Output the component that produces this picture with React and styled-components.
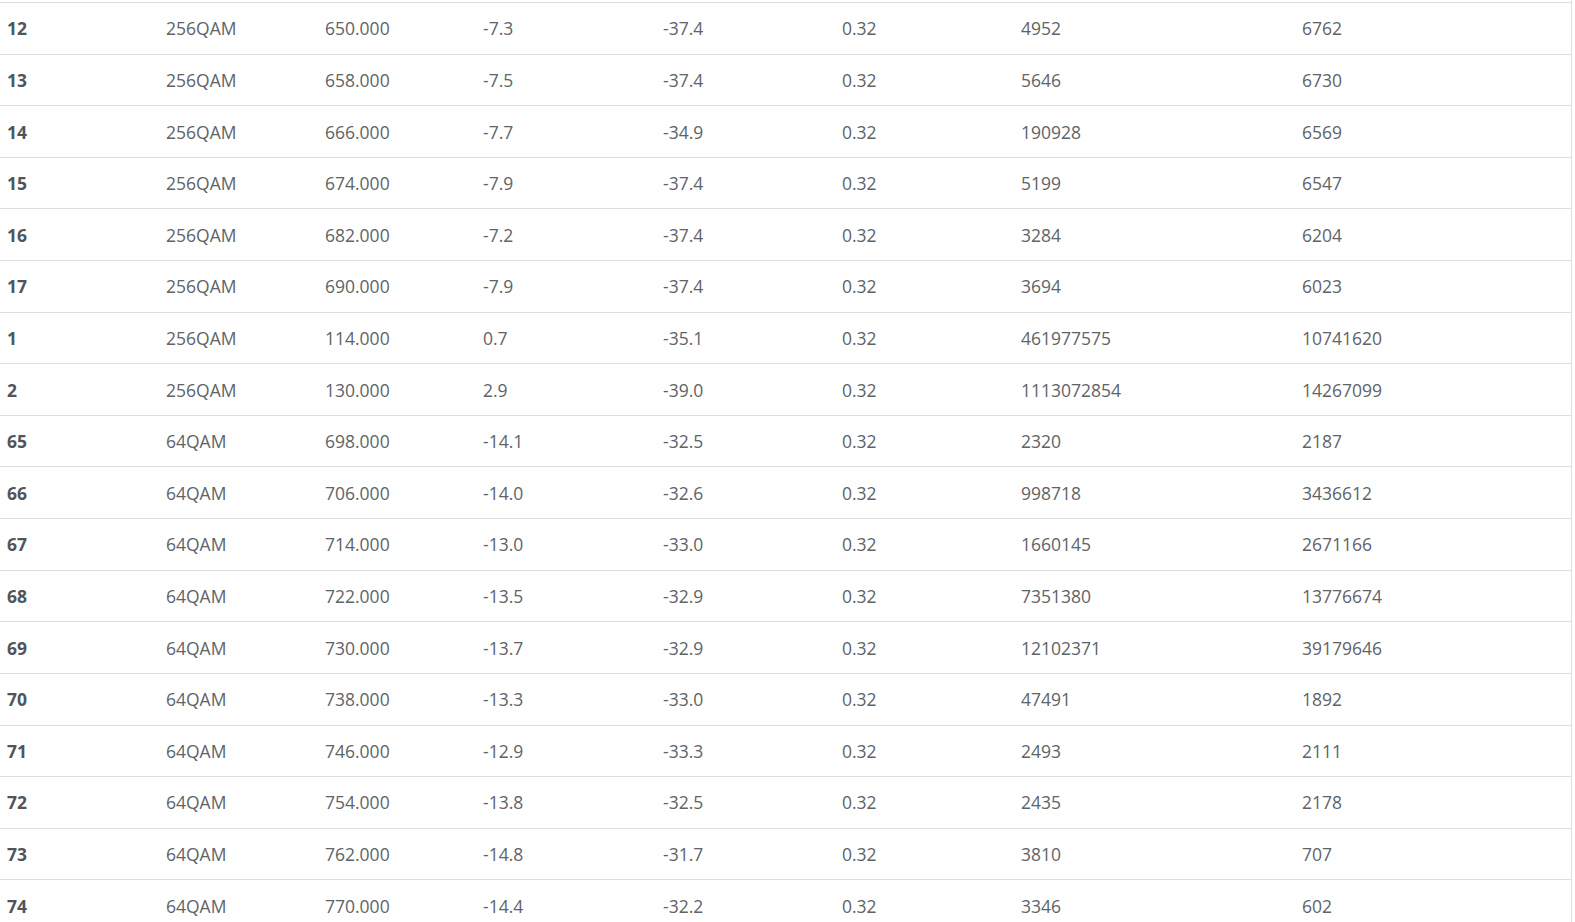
import React from "react"
import styled, { createGlobalStyle } from "styled-components"

const GlobalStyle = createGlobalStyle`
  html, body {
    margin: 0;
    padding: 0;
    background: #fff;
  }
  body {
    font-family: "Open Sans", "Liberation Sans", sans-serif;
  }
`

const Panel = styled.div`
  width: 1572px;
  padding-top: 2px;
  border-right: 1px solid #dedede;
  box-sizing: border-box;
`

const Table = styled.table`
  width: 100%;
  border-collapse: separate;
  border-spacing: 0;
  table-layout: fixed;
`

const Cell = styled.td`
  height: 51.62px;
  box-sizing: border-box;
  padding: 0 8px;
  border-top: 1px solid #dedede;
  font-size: 17.5px;
  line-height: 24px;
  color: #606468;
  font-weight: ${(p) => (p.$head ? 700 : 400)};
  white-space: nowrap;
  vertical-align: middle;
  &:first-child {
    padding-left: 7px;
    color: #50555a;
  }
`

const widths = [158, 159, 158, 180, 179, 179, 281, 277]

const rows = [
  ["12", "256QAM", "650.000", "-7.3", "-37.4", "0.32", "4952", "6762"],
  ["13", "256QAM", "658.000", "-7.5", "-37.4", "0.32", "5646", "6730"],
  ["14", "256QAM", "666.000", "-7.7", "-34.9", "0.32", "190928", "6569"],
  ["15", "256QAM", "674.000", "-7.9", "-37.4", "0.32", "5199", "6547"],
  ["16", "256QAM", "682.000", "-7.2", "-37.4", "0.32", "3284", "6204"],
  ["17", "256QAM", "690.000", "-7.9", "-37.4", "0.32", "3694", "6023"],
  ["1", "256QAM", "114.000", "0.7", "-35.1", "0.32", "461977575", "10741620"],
  ["2", "256QAM", "130.000", "2.9", "-39.0", "0.32", "1113072854", "14267099"],
  ["65", "64QAM", "698.000", "-14.1", "-32.5", "0.32", "2320", "2187"],
  ["66", "64QAM", "706.000", "-14.0", "-32.6", "0.32", "998718", "3436612"],
  ["67", "64QAM", "714.000", "-13.0", "-33.0", "0.32", "1660145", "2671166"],
  ["68", "64QAM", "722.000", "-13.5", "-32.9", "0.32", "7351380", "13776674"],
  ["69", "64QAM", "730.000", "-13.7", "-32.9", "0.32", "12102371", "39179646"],
  ["70", "64QAM", "738.000", "-13.3", "-33.0", "0.32", "47491", "1892"],
  ["71", "64QAM", "746.000", "-12.9", "-33.3", "0.32", "2493", "2111"],
  ["72", "64QAM", "754.000", "-13.8", "-32.5", "0.32", "2435", "2178"],
  ["73", "64QAM", "762.000", "-14.8", "-31.7", "0.32", "3810", "707"],
  ["74", "64QAM", "770.000", "-14.4", "-32.2", "0.32", "3346", "602"],
]

export default function App() {
  return (
    <>
      <GlobalStyle />
      <Panel>
        <Table>
          <colgroup>
            {widths.map((w, i) => (
              <col key={i} style={{ width: w }} />
            ))}
          </colgroup>
          <tbody>
            {rows.map((r) => (
              <tr key={r[0]}>
                {r.map((v, i) => (
                  <Cell key={i} $head={i === 0}>
                    {v}
                  </Cell>
                ))}
              </tr>
            ))}
          </tbody>
        </Table>
      </Panel>
    </>
  )
}
